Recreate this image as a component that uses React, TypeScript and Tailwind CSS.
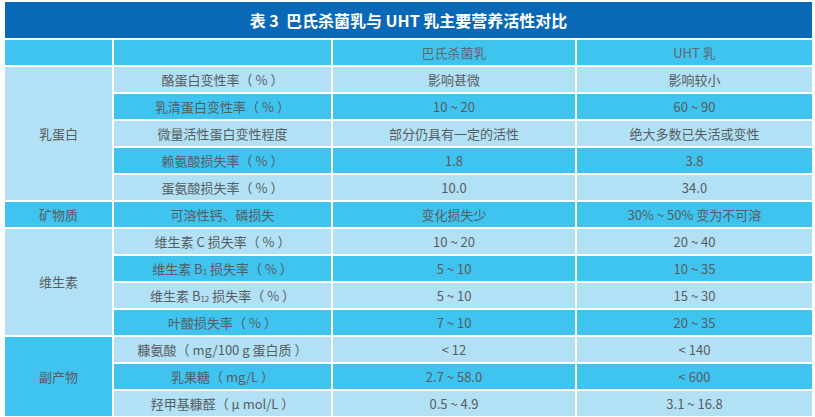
import React from "react";

const DARK = "bg-[#3fc3ef]";
const LIGHT = "bg-[#b2e1f5]";

type Row = { label: React.ReactNode; a: string; b: string };

const groups: { name: string; rows: Row[] }[] = [
  {
    name: "乳蛋白",
    rows: [
      { label: "酪蛋白变性率（ % ）", a: "影响甚微", b: "影响较小" },
      { label: "乳清蛋白变性率（ % ）", a: "10 ~ 20", b: "60 ~ 90" },
      { label: "微量活性蛋白变性程度", a: "部分仍具有一定的活性", b: "绝大多数已失活或变性" },
      { label: "赖氨酸损失率（ % ）", a: "1.8", b: "3.8" },
      { label: "蛋氨酸损失率（ % ）", a: "10.0", b: "34.0" },
    ],
  },
  {
    name: "矿物质",
    rows: [{ label: "可溶性钙、磷损失", a: "变化损失少", b: "30% ~ 50% 变为不可溶" }],
  },
  {
    name: "维生素",
    rows: [
      { label: "维生素 C 损失率（ % ）", a: "10 ~ 20", b: "20 ~ 40" },
      {
        label: (
          <>
            维生素 B<sub className="text-[8px] align-baseline relative top-[3px]">1</sub>&nbsp;损失率（ % ）
          </>
        ),
        a: "5 ~ 10",
        b: "10 ~ 35",
      },
      {
        label: (
          <>
            维生素 B<sub className="text-[8px] align-baseline relative top-[3px]">12</sub>&nbsp;损失率（ % ）
          </>
        ),
        a: "5 ~ 10",
        b: "15 ~ 30",
      },
      { label: "叶酸损失率（ % ）", a: "7 ~ 10", b: "20 ~ 35" },
    ],
  },
  {
    name: "副产物",
    rows: [
      { label: "糠氨酸（ mg/100 g 蛋白质 ）", a: "< 12", b: "< 140" },
      { label: "乳果糖（ mg/L ）", a: "2.7 ~ 58.0", b: "< 600" },
      { label: "羟甲基糠醛（ μ mol/L ）", a: "0.5 ~ 4.9", b: "3.1 ~ 16.8" },
    ],
  },
];

const groupSpan: Record<number, string> = {
  1: "row-span-1",
  3: "row-span-3",
  4: "row-span-4",
  5: "row-span-5",
};

export default function App() {
  let idx = 0;
  const cells: React.ReactNode[] = [];
  groups.forEach((g, gi) => {
    const gDark = gi % 2 === 1;
    cells.push(
      <div
        key={`g${gi}`}
        className={`col-start-1 ${groupSpan[g.rows.length]} ${gDark ? DARK : LIGHT} flex items-center justify-center`}
      >
        {g.name}
      </div>
    );
    g.rows.forEach((r, ri) => {
      const dark = idx % 2 === 1;
      idx++;
      const bg = dark ? DARK : LIGHT;
      cells.push(
        <div key={`l${gi}-${ri}`} className={`col-start-2 ${bg} flex items-center justify-center`}>
          {r.label}
        </div>,
        <div key={`a${gi}-${ri}`} className={`col-start-3 ${bg} flex items-center justify-center`}>
          {r.a}
        </div>,
        <div key={`b${gi}-${ri}`} className={`col-start-4 ${bg} flex items-center justify-center`}>
          {r.b}
        </div>
      );
    });
  });

  return (
    <div
      className="w-[815px] h-[417px] bg-white pl-[5px] pt-[2px] overflow-hidden"
      style={{ fontFamily: '"Noto Sans CJK SC", "Noto Sans", sans-serif' }}
    >
      <div className="w-[807px] flex flex-col gap-[2px]">
        <div className="h-[36px] bg-[#0a69b7] flex items-center justify-center text-white font-bold text-[16px]">
          表 3&nbsp; 巴氏杀菌乳与 UHT 乳主要营养活性对比
        </div>
        <div className="grid grid-cols-[107px_217px_242px_235px] auto-rows-[25px] gap-[2px] text-[13px] text-[#585d61]">
          <div className={`${DARK}`}></div>
          <div className={`${DARK}`}></div>
          <div className={`${DARK} flex items-center justify-center text-[#5d6a72]`}>巴氏杀菌乳</div>
          <div className={`${DARK} flex items-center justify-center text-[#5d6a72]`}>UHT 乳</div>
          {cells}
        </div>
      </div>
    </div>
  );
}
